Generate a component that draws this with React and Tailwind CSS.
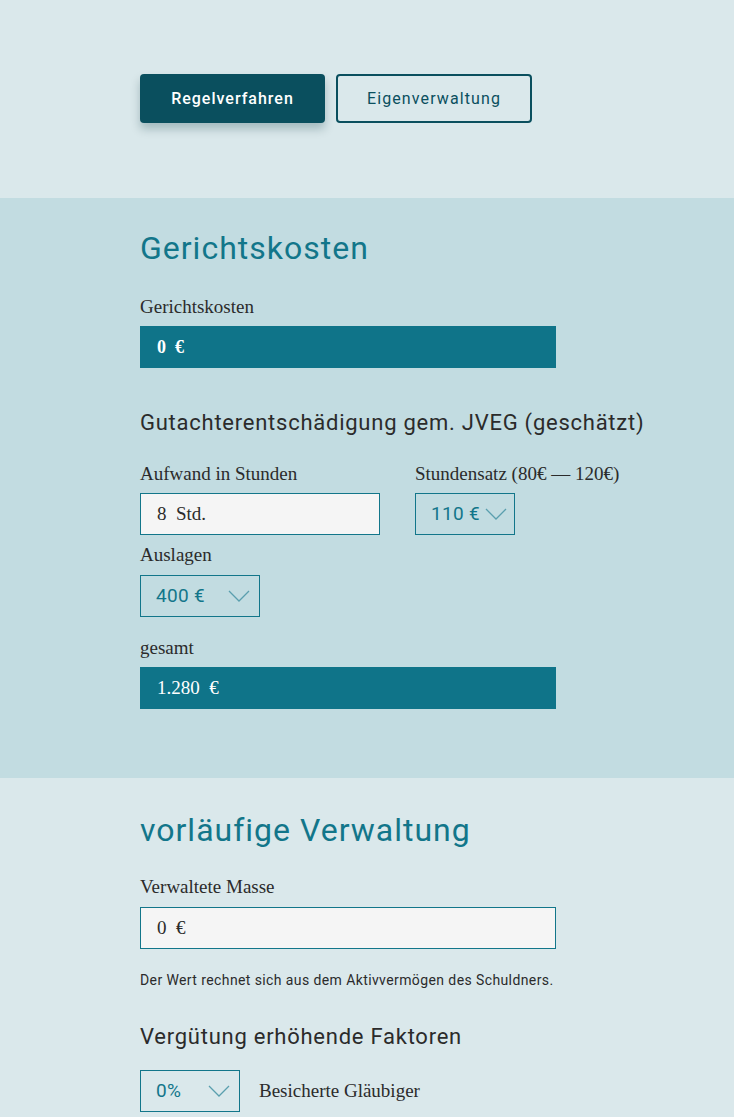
import React from "react";

const sans = { fontFamily: "Roboto, 'Open Sans', sans-serif" };
const serif = { fontFamily: "'Liberation Serif', 'DejaVu Serif', serif" };

function Chevron() {
  return (
    <svg className="shrink-0" width="22" height="12" viewBox="0 0 22 12" fill="none">
      <path d="M1 1 L11 11 L21 1" stroke="#5a9fae" strokeWidth="1.3" />
    </svg>
  );
}

function Label({ children, className = "" }) {
  return (
    <div className={"text-[19px] leading-[22px] text-[#2b2b2b] whitespace-nowrap " + className} style={serif}>
      {children}
    </div>
  );
}

function Select({ value, width, justify = "between" }) {
  return (
    <div
      className={
        "h-[42px] border border-[#12768a] flex items-center pl-[15px] pr-[9px] text-[19px] tracking-[0.3px] text-[#12768a] whitespace-nowrap " +
        width +
        (justify === "between" ? " justify-between" : " gap-[5px]")
      }
      style={sans}
    >
      <span>{value}</span>
      <Chevron />
    </div>
  );
}

export default function App() {
  return (
    <div className="w-[734px] min-h-[1117px] bg-[#dae8eb]">
      <div className="pt-[74px] pb-[75px] pl-[140px] flex gap-[11px]" style={sans}>
        <button className="w-[185px] h-[49px] rounded-[4px] bg-[#0a4f5e] text-white text-[16px] font-medium tracking-[1px] shadow-[0_6px_10px_rgba(0,50,60,0.25)]">
          Regelverfahren
        </button>
        <button className="w-[196px] h-[49px] rounded-[4px] border-2 border-[#0a4f5e] text-[#0a4f5e] text-[16px] tracking-[1.1px]">
          Eigenverwaltung
        </button>
      </div>

      <div className="bg-[#c2dce1] pt-[30px] pb-[69px] pl-[140px]">
        <h2 className="text-[32px] leading-[40px] text-[#12768a] tracking-[1px]" style={sans}>Gerichtskosten</h2>
        <Label className="mt-[28px]">Gerichtskosten</Label>
        <div className="mt-[8px] w-[416px] h-[42px] bg-[#0f7489] flex items-center pl-[17px] text-white text-[18px] font-bold" style={serif}>
          0&nbsp;&nbsp;€
        </div>
        <h3 className="mt-[40px] text-[22px] leading-[30px] text-[#2b2b2b] tracking-[0.75px]" style={sans}>
          Gutachterentschädigung gem. JVEG (geschätzt)
        </h3>
        <div className="mt-[25px] flex gap-[35px]">
          <div className="w-[240px]">
            <Label>Aufwand in Stunden</Label>
            <div className="mt-[8px] h-[42px] bg-[#f5f5f5] border border-[#12768a] flex items-center pl-[16px] text-[19px] text-[#2b2b2b]" style={serif}>
              8&nbsp;&nbsp;Std.
            </div>
          </div>
          <div>
            <Label>Stundensatz (80€ — 120€)</Label>
            <div className="mt-[8px]">
              <Select value="110 €" width="w-[100px]" justify="gap" />
            </div>
          </div>
        </div>
        <Label className="mt-[9px]">Auslagen</Label>
        <div className="mt-[9px]">
          <Select value="400 €" width="w-[120px]" />
        </div>
        <Label className="mt-[20px]">gesamt</Label>
        <div className="mt-[8px] w-[416px] h-[42px] bg-[#0f7489] flex items-center pl-[17px] text-white text-[19px]" style={serif}>
          1.280&nbsp;&nbsp;€
        </div>
      </div>

      <div className="pt-[32px] pl-[140px] pb-[5px]">
        <h2 className="text-[32px] leading-[40px] text-[#12768a] tracking-[1px]" style={sans}>vorläufige Verwaltung</h2>
        <Label className="mt-[26px]">Verwaltete Masse</Label>
        <div className="mt-[9px] w-[416px] h-[42px] bg-[#f5f5f5] border border-[#12768a] flex items-center pl-[16px] text-[19px] text-[#2b2b2b]" style={serif}>
          0&nbsp;&nbsp;€
        </div>
        <p className="mt-[21px] text-[14px] leading-[20px] text-[#2b2b2b] tracking-[0.4px]" style={sans}>
          Der Wert rechnet sich aus dem Aktivvermögen des Schuldners.
        </p>
        <h3 className="mt-[32px] text-[22px] leading-[30px] text-[#2b2b2b] tracking-[0.75px]" style={sans}>
          Vergütung erhöhende Faktoren
        </h3>
        <div className="mt-[18px] flex items-center gap-[19px]">
          <Select value="0%" width="w-[100px]" />
          <Label>Besicherte Gläubiger</Label>
        </div>
      </div>
    </div>
  );
}
